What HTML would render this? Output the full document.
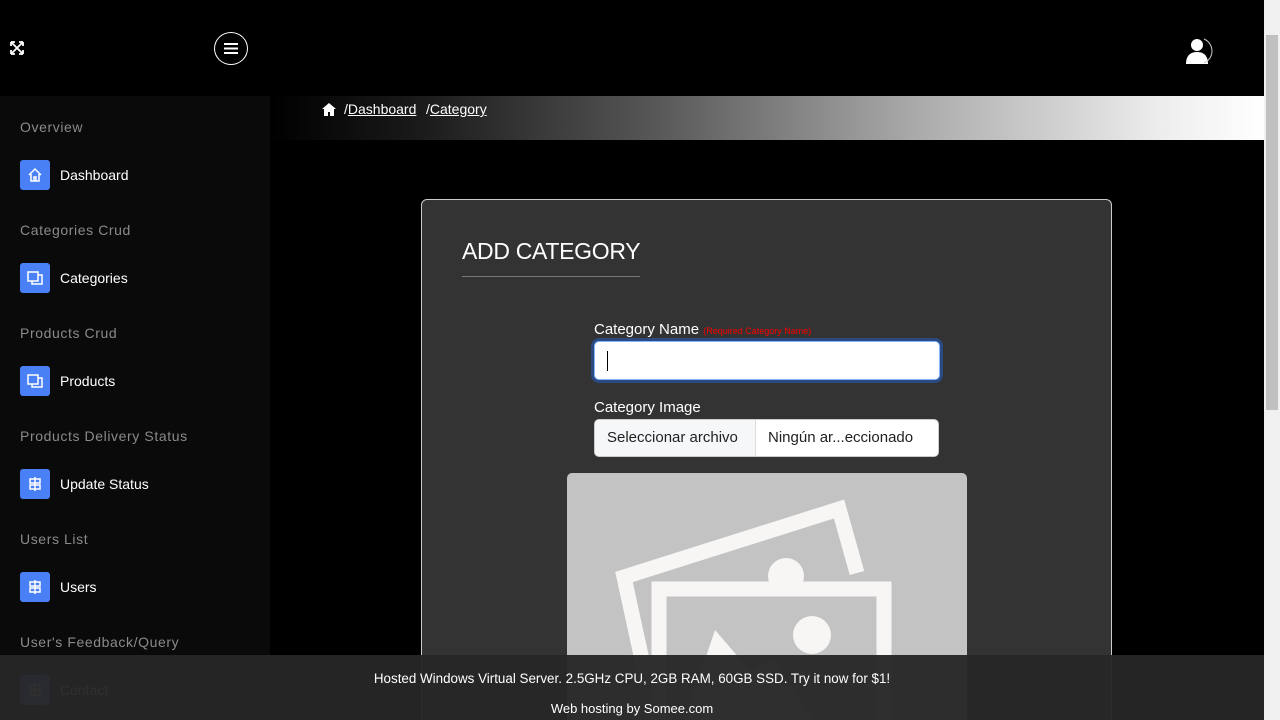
<!DOCTYPE html>
<html><head><style>
*{box-sizing:border-box;margin:0;padding:0}
html,body{width:1280px;height:720px;overflow:hidden}
body{background:#000;font-family:"Liberation Sans",sans-serif;position:relative;color:#fff}
.side{position:absolute;left:0;top:96px;width:270px;height:624px;background:#0a0a0a}
.sec{position:absolute;left:20px;font-size:14px;color:#8a8a8a;letter-spacing:.6px}
.item{position:absolute;left:20px;display:flex;align-items:center;font-size:14px}
.ic{width:30px;height:30px;background:#4a80f5;border-radius:3px;margin-right:10px;display:flex;align-items:center;justify-content:center}
.bc{position:absolute;left:270px;top:96px;width:994px;height:44px;background:linear-gradient(90deg,#000 0%,#1a1a1a 15%,#555 38%,#aaa 65%,#eee 90%,#fff 100%);font-size:14px}
.card{position:absolute;left:421px;top:199px;width:691px;height:521px;background:#333;border:1px solid #ccc;border-bottom:none;border-radius:6px 6px 0 0;overflow:hidden}
.foot{position:absolute;left:0;top:655px;width:1264px;height:65px;background:rgba(38,38,38,.96);text-align:center;font-size:13.4px}
.sb{position:absolute;left:1264px;top:0;width:16px;height:720px;background:#f1f1f1}
.th{position:absolute;left:1266px;top:35px;width:12px;height:375px;background:#c1c1c1}
.wrap{position:absolute;left:0;top:0;width:1280px;height:720px;overflow:hidden}
</style></head><body><div class="wrap">
<svg style="position:absolute;left:10px;top:41px" width="14" height="14" viewBox="0 0 14 14" stroke="#fff" stroke-width="1.8" fill="none"><path d="M2 2L12 12M12 2L2 12M1 1h4M1 1v4M13 1h-4M13 1v4M1 13h4M1 13v-4M13 13h-4M13 13v-4"/></svg>
<div style="position:absolute;left:214px;top:32px;width:34px;height:33px;border:1.5px solid #fff;border-radius:50%"></div>
<svg style="position:absolute;left:224px;top:42px" width="14" height="13"><path d="M0 2h14M0 6.5h14M0 11h14" stroke="#fff" stroke-width="2"/></svg>
<svg style="position:absolute;left:1182px;top:36px" width="32" height="32" viewBox="0 0 32 32"><circle cx="15" cy="9" r="6" fill="#fff"/><path d="M4 28c0-8 4-12 11-12s11 4 11 12z" fill="#fff"/><path d="M22 3a13 13 0 0 1 0 24" stroke="#ccc" fill="none" stroke-width="1"/></svg>
<div class="side">
<div class="sec" style="top:23px">Overview</div>
<div class="item" style="top:64px"><div class="ic"><svg width="16" height="16" viewBox="0 0 16 16" fill="none" stroke="#fff" stroke-width="1.5"><path d="M2 8L8 2l6 6M4 7v7h8V7M7 14v-4h2v4"/></svg></div>Dashboard</div>
<div class="sec" style="top:126px">Categories Crud</div>
<div class="item" style="top:167px"><div class="ic"><svg width="16" height="16" fill="none" stroke="#fff" stroke-width="1.5"><rect x="1" y="2" width="10" height="9"/><path d="M5 11v3h10V5h-4"/></svg></div>Categories</div>
<div class="sec" style="top:229px">Products Crud</div>
<div class="item" style="top:270px"><div class="ic"><svg width="16" height="16" fill="none" stroke="#fff" stroke-width="1.5"><rect x="1" y="2" width="10" height="9"/><path d="M5 11v3h10V5h-4"/></svg></div>Products</div>
<div class="sec" style="top:332px">Products Delivery Status</div>
<div class="item" style="top:373px"><div class="ic"><svg width="16" height="16" fill="none" stroke="#fff" stroke-width="1.5"><path d="M8 1v14"/><rect x="3" y="3" width="10" height="4"/><rect x="3" y="9" width="10" height="4"/></svg></div>Update Status</div>
<div class="sec" style="top:435px">Users List</div>
<div class="item" style="top:476px"><div class="ic"><svg width="16" height="16" fill="none" stroke="#fff" stroke-width="1.5"><path d="M8 1v14"/><rect x="3" y="3" width="10" height="4"/><rect x="3" y="9" width="10" height="4"/></svg></div>Users</div>
<div class="sec" style="top:538px">User's Feedback/Query</div>
<div class="item" style="top:579px"><div class="ic"><svg width="16" height="16" fill="none" stroke="#fff" stroke-width="1.5"><path d="M8 1v14"/><rect x="3" y="3" width="10" height="4"/><rect x="3" y="9" width="10" height="4"/></svg></div>Contact</div>
</div>
<div class="bc">
<svg style="position:absolute;left:52px;top:7px" width="14" height="13" viewBox="0 0 14 13"><path d="M7 0L0 6h2v7h4V9h2v4h4V6h2z" fill="#fff"/></svg>
<span style="position:absolute;left:74px;top:5px">/<u>Dashboard</u></span>
<span style="position:absolute;left:156px;top:5px">/<u>Category</u></span>
</div>
<div class="card">
<div style="position:absolute;left:40px;top:38px;font-size:23px;padding-bottom:11px;border-bottom:1px solid #777;letter-spacing:-.3px">ADD CATEGORY</div>
<div style="position:absolute;left:172px;top:121px;font-size:15px">Category Name <span style="color:#f00;font-size:9px">(Required Category Name)</span></div>
<div style="position:absolute;left:172px;top:141px;width:346px;height:39px;background:#fff;border:1px solid #86b7fe;border-radius:5px;box-shadow:0 0 0 3px #2b4a80"><div style="position:absolute;left:12px;top:9px;width:1px;height:20px;background:#000"></div></div>
<div style="position:absolute;left:172px;top:199px;font-size:15px">Category Image</div>
<div style="position:absolute;left:172px;top:219px;width:345px;height:38px;background:#fff;border:1px solid #ccc;border-radius:5px;font-size:15px;color:#222;overflow:hidden"><span style="position:absolute;left:0;top:0;width:161px;height:36px;background:#f6f7f9;border-right:1px solid #ddd;padding:9px 12px">Seleccionar archivo</span><span style="position:absolute;left:173px;top:9px">Ningún ar...eccionado</span></div>
<div style="position:absolute;left:145px;top:273px;width:400px;height:247px;background:#c4c3c3;border-radius:5px 5px 0 0;overflow:hidden">
<svg width="400" height="247"><g fill="none" stroke="#f7f6f5" stroke-width="15"><path d="M80 210L57 104 272 36 290 100"/><rect x="92" y="116" width="225" height="200"/></g><circle cx="219" cy="103" r="18" fill="#f7f6f5"/><circle cx="245" cy="162" r="19" fill="#f7f6f5"/><path d="M100 300L148 157 185 200 205 185 280 300z" fill="#f7f6f5"/></svg></div>
</div>
<div class="foot"><div style="position:absolute;top:16px;width:100%">Hosted Windows Virtual Server. 2.5GHz CPU, 2GB RAM, 60GB SSD. Try it now for $1!</div><div style="position:absolute;top:46px;width:100%;font-size:13px">Web hosting by Somee.com</div></div>
<div class="sb"></div><div class="th"></div>
</div></body></html>
